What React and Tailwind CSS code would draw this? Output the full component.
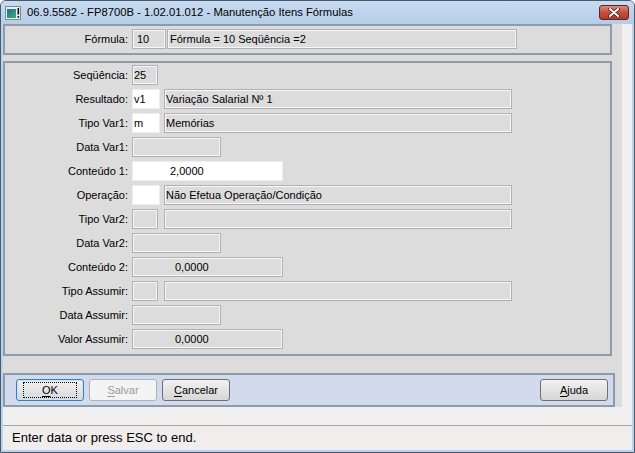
import React from "react";

const font = "font-['Liberation_Sans',Arial,sans-serif]";

function Field({ className = "", white = false, children }) {
    return (
        <div
            className={
                "h-[20px] flex items-center whitespace-nowrap overflow-hidden text-[11px] text-black " +
                (white
                    ? "bg-white border border-[#eeeeee] "
                    : "bg-[#dcdcdc] border border-[#b1b1b1] shadow-[inset_1px_1px_0_#f6f6f6,inset_-1px_-1px_0_#f6f6f6] ") +
                className
            }
        >
            {children}
        </div>
    );
}

function Row({ label, children }) {
    return (
        <div className="flex items-center h-[20px]">
            <div className="w-[123px] mr-[4px] text-right text-[11px] text-black whitespace-nowrap">
                {label}
            </div>
            {children}
        </div>
    );
}

function Btn({ access, rest, focus = false, disabled = false }) {
    let cls =
        "w-[68px] h-[22px] rounded-[3px] flex items-center justify-center text-[11px] ";
    if (disabled) {
        cls += "border border-[#adb2b5] bg-[#f4f4f4] text-[#9a9a9a]";
    } else if (focus) {
        cls +=
            "border border-[#3c7fb1] bg-gradient-to-b from-[#f2f2f2] to-[#d8d8d8] text-black shadow-[inset_0_0_0_1px_#c5e2f6]";
    } else {
        cls += "border border-[#707070] bg-gradient-to-b from-[#f2f2f2] to-[#d6d6d6] text-black";
    }
    return (
        <div className={cls}>
            <div
                className={
                    "flex items-center justify-center px-[18px] h-[16px] " +
                    (focus ? "border border-dotted border-black" : "border border-transparent")
                }
            >
                <span className="underline underline-offset-2">{access}</span>
                <span>{rest}</span>
            </div>
        </div>
    );
}

export default function App() {
    return (
        <div
            className={`${font} w-[635px] h-[453px] flex flex-col bg-[#bad2ec] border border-[#465a6d] rounded-t-[6px] overflow-hidden`}
        >
            {/* Title bar */}
            <div className="h-[23px] flex items-center bg-gradient-to-b from-[#c8dbf0] to-[#b5cde8]">
                <svg width="16" height="14" viewBox="0 0 16 14" className="ml-[4px] mt-[1px]">
                    <rect x="0.5" y="0.5" width="15" height="13" fill="#e8eef4" stroke="#7d8a96" />
                    <rect x="2" y="3" width="9" height="9" fill="url(#g)" />
                    <rect x="12.5" y="2" width="1.6" height="6.5" fill="#111" />
                    <rect x="12.5" y="10" width="1.6" height="1.8" fill="#111" />
                    <defs>
                        <linearGradient id="g" x1="0" y1="0" x2="1" y2="1">
                            <stop offset="0" stopColor="#1f6f9a" />
                            <stop offset="1" stopColor="#3fae6a" />
                        </linearGradient>
                    </defs>
                </svg>
                <span className="ml-[6px] text-[11.25px] text-black whitespace-nowrap">
                    06.9.5582 - FP8700B - 1.02.01.012 - Manutenção Itens Fórmulas
                </span>
                <div className="ml-auto mr-[5px] w-[30px] h-[15px] rounded-[3px] border border-[#5e2621] bg-gradient-to-b from-[#d9897e] via-[#c44f3f] to-[#b23a2a] flex items-center justify-center">
                    <svg width="12" height="9" viewBox="0 0 12 9">
                        <path
                            d="M2 1 L10 8 M10 1 L2 8"
                            stroke="#3a1410"
                            strokeWidth="3.4"
                            strokeLinecap="round"
                        />
                        <path
                            d="M2 1 L10 8 M10 1 L2 8"
                            stroke="#ffffff"
                            strokeWidth="2"
                            strokeLinecap="round"
                        />
                    </svg>
                </div>
            </div>

            {/* Body */}
            <div className="flex-1 flex flex-col mx-[2px]">
                <div className="flex h-[383px]">
                    <div className="w-[619px] bg-[#dcdcdc] flex flex-col">
                        {/* Top panel */}
                        <div className="w-[609px] h-[31px] border-2 border-[#8e9bab] pt-[3px]">
                            <div className="flex items-center">
                                <div className="w-[123px] mr-[4px] text-right text-[11px] text-black">
                                    Fórmula:
                                </div>
                                <Field className="w-[34px] pl-[4px]">10</Field>
                                <Field className="w-[350px] ml-[1px] pl-[2px]">
                                    Fórmula = 10 Seqüência =2
                                </Field>
                            </div>
                        </div>

                        {/* Form panel */}
                        <div className="w-[609px] h-[295px] mt-[6px] border-2 border-[#8e9bab] pt-[2px] flex flex-col gap-[4px]">
                            <Row label="Seqüência:">
                                <Field className="w-[26px] pl-[1px]">25</Field>
                            </Row>
                            <Row label="Resultado:">
                                <Field white className="w-[28px] pl-[1px]">v1</Field>
                                <Field className="w-[348px] ml-[4px] pl-[1px]">
                                    Variação Salarial Nº 1
                                </Field>
                            </Row>
                            <Row label="Tipo Var1:">
                                <Field white className="w-[28px] pl-[1px]">m</Field>
                                <Field className="w-[348px] ml-[4px] pl-[1px]">Memórias</Field>
                            </Row>
                            <Row label="Data Var1:">
                                <Field className="w-[89px]" />
                            </Row>
                            <Row label="Conteúdo 1:">
                                <Field white className="w-[151px] pl-[37px]">2,0000</Field>
                            </Row>
                            <Row label="Operação:">
                                <Field white className="w-[28px]" />
                                <Field className="w-[348px] ml-[4px] pl-[1px]">
                                    Não Efetua Operação/Condição
                                </Field>
                            </Row>
                            <Row label="Tipo Var2:">
                                <Field className="w-[26px]" />
                                <Field className="w-[348px] ml-[6px]" />
                            </Row>
                            <Row label="Data Var2:">
                                <Field className="w-[89px]" />
                            </Row>
                            <Row label="Conteúdo 2:">
                                <Field className="w-[151px] pl-[42px]">0,0000</Field>
                            </Row>
                            <Row label="Tipo Assumir:">
                                <Field className="w-[26px]" />
                                <Field className="w-[348px] ml-[6px]" />
                            </Row>
                            <Row label="Data Assumir:">
                                <Field className="w-[89px]" />
                            </Row>
                            <Row label="Valor Assumir:">
                                <Field className="w-[151px] pl-[42px]">0,0000</Field>
                            </Row>
                        </div>

                        {/* Button bar */}
                        <div className="w-[612px] h-[34px] mt-[17px] border-2 border-[#8e9bab] bg-[#d1dbed] flex items-center pl-[11px] pr-[5px] gap-[5px]">
                            <Btn access="O" rest="K" focus />
                            <Btn access="S" rest="alvar" disabled />
                            <Btn access="C" rest="ancelar" />
                            <div className="ml-auto">
                                <Btn access="A" rest="juda" />
                            </div>
                        </div>
                    </div>
                    <div className="flex-1 bg-[#f0f0f0]" />
                </div>
                <div className="h-[18px] bg-[#f0f0f0]" />
                <div className="h-[25px] border-t border-[#a3a3a3] bg-[#f1eded] flex items-center pl-[9px] text-[13px] text-black">
                    Enter data or press ESC to end.
                </div>
            </div>
            <div className="h-[2px]" />
        </div>
    );
}
